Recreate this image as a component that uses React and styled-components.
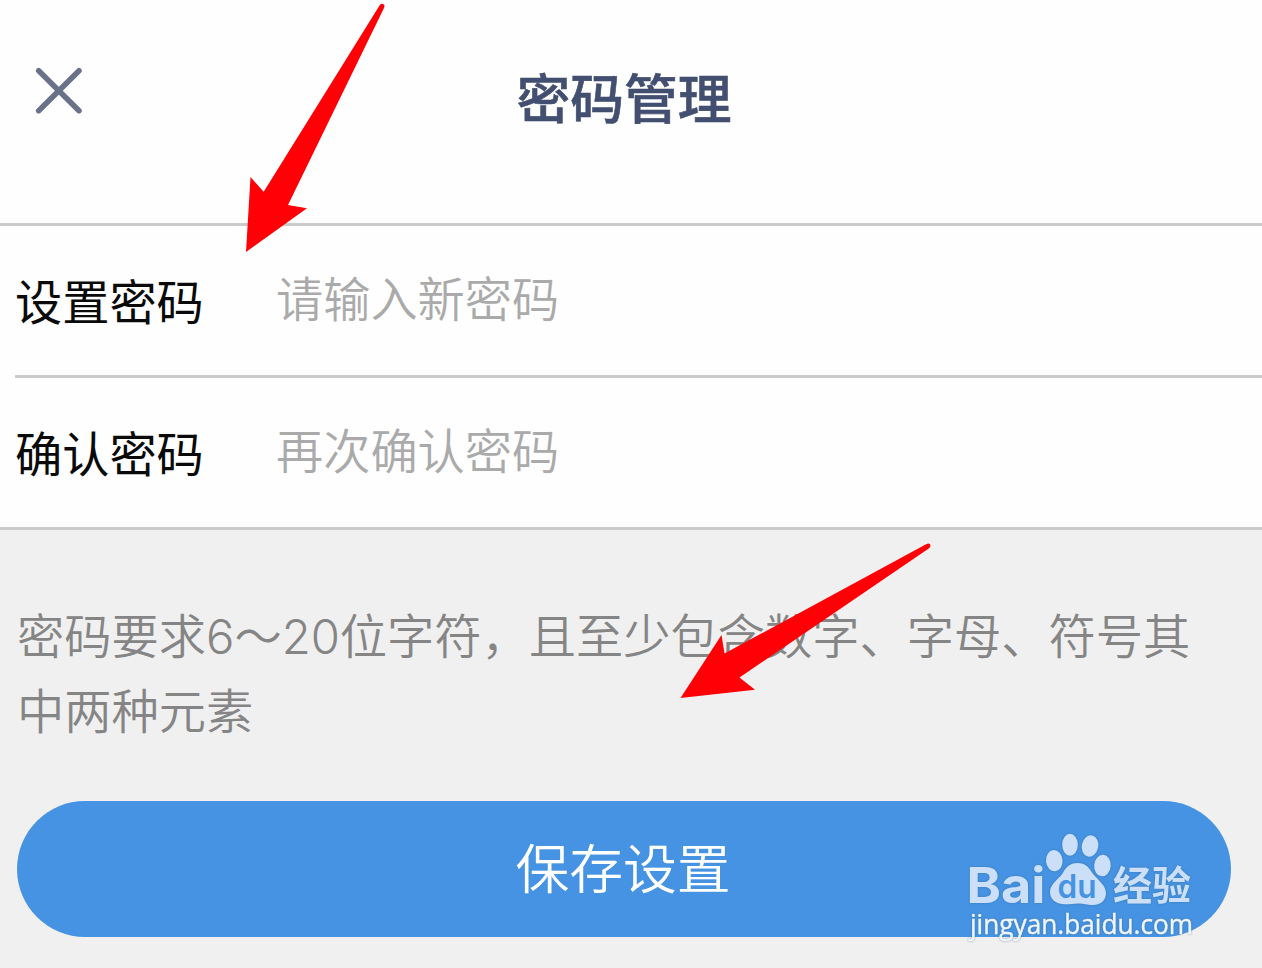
import React, { useState } from 'react';
import styled, { createGlobalStyle } from 'styled-components';

const GlobalStyle = createGlobalStyle`
  * {
    box-sizing: border-box;
  }
  body {
    margin: 0;
    background: #f0f0f0;
    font-family: 'Inter', 'Noto Sans CJK SC', sans-serif;
  }
`;

const Page = styled.div`
  position: relative;
  display: flex;
  flex-direction: column;
  height: 968px;
  overflow: hidden;
  background: #f0f0f0;
`;

const Header = styled.header`
  display: grid;
  grid-template-columns: 118px 1fr 132px;
  height: 223px;
  background: #fefefe;
`;

const CloseButton = styled.button`
  width: 118px;
  height: 182px;
  padding: 0;
  border: none;
  background: none;
  cursor: pointer;
  svg {
    display: block;
  }
`;

const Title = styled.h1`
  margin: 0;
  height: 192px;
  font-family: 'Noto Sans CJK SC', sans-serif;
  font-size: 53.8px;
  font-weight: 500;
  line-height: 192px;
  text-align: center;
  color: #424f70;
  -webkit-text-stroke: 0.6px #424f70;
`;

const Form = styled.div`
  border-top: 3px solid #cbcbcb;
  border-bottom: 3px solid #cbcbcb;
  background: #fefefe;
`;

const Row = styled.label`
  display: flex;
  align-items: center;
  height: ${(props) => (props.$divided ? '152px' : '149px')};
  margin-left: 15px;
  border-bottom: ${(props) => (props.$divided ? '3px solid #cbcbcb' : 'none')};
`;

const Label = styled.span`
  width: 261px;
  padding-top: 4px;
  font-size: 47.2px;
  line-height: 70px;
  color: #0a0a0a;
`;

const Input = styled.input`
  flex: 1;
  height: 80px;
  margin-bottom: 2px;
  padding: 0;
  border: none;
  outline: none;
  background: none;
  font-family: inherit;
  font-size: 47.2px;
  font-weight: 350;
  &::placeholder {
    color: #aaaaaa;
    opacity: 1;
  }
`;

const Hint = styled.p`
  margin: 69px 0 0;
  padding: 0 30px 0 17px;
  font-size: 47.25px;
  font-weight: 350;
  line-height: 75px;
  color: #858585;
`;

const SaveButton = styled.button`
  width: 1214px;
  height: 136px;
  margin: 52px 0 0 17px;
  padding: 0 2px 8px 0;
  border: none;
  border-radius: 68px;
  background: #4593e2;
  font-family: inherit;
  font-size: 53.8px;
  font-weight: 350;
  color: #ffffff;
  cursor: pointer;
`;

const Arrows = styled.svg`
  position: absolute;
  top: 0;
  left: 0;
  pointer-events: none;
`;

const Watermark = styled.svg`
  position: absolute;
  right: 62px;
  bottom: 22px;
  pointer-events: none;
`;

const Mark = styled.g`
  fill: #cbe0f8;
  filter: drop-shadow(0 0 1px rgba(50, 90, 140, 0.5));
`;

const SiteName = styled.text`
  font-family: 'Open Sans', sans-serif;
  font-size: 27px;
  fill: #f0f6fd;
  stroke: #f0f6fd;
  stroke-width: 0.4px;
  filter: drop-shadow(0 0 1px rgba(60, 90, 125, 0.55));
`;

function PasswordRow({ label, placeholder, divided }) {
  const [value, setValue] = useState('');
  return (
    <Row $divided={divided}>
      <Label>{label}</Label>
      <Input
        type="text"
        placeholder={placeholder}
        value={value}
        onChange={(e) => setValue(e.target.value)}
      />
    </Row>
  );
}

function BaiduMark() {
  return (
    <Watermark width="240" height="120" viewBox="960 826 240 120">
      <Mark>
        <text x="966.5" y="903" fontFamily="Inter" fontWeight="700" fontSize="50" textLength="79" lengthAdjust="spacingAndGlyphs">Bai</text>
        <ellipse cx="1054.3" cy="860.7" rx="8.3" ry="10.6" transform="rotate(-5 1054 861)" />
        <ellipse cx="1070" cy="844.7" rx="7.8" ry="11" />
        <ellipse cx="1090" cy="846" rx="8.2" ry="10.8" transform="rotate(12 1090 846)" />
        <ellipse cx="1102.5" cy="865.5" rx="8.3" ry="10.8" transform="rotate(5 1102 865)" />
        <path d="M1077.5 863C1084 863 1088 866 1091 871C1094 877 1106 884 1106 893C1106 901 1100 905 1093 905C1087 905 1084 903.5 1078 903.5C1072 903.5 1068 905 1062 904C1055 903 1050 899 1050 892C1050 883 1061 878 1064 871C1067 866 1071 863 1077.5 863Z" />
        <text x="1113" y="900" fontFamily="Noto Sans CJK SC" fontWeight="700" fontSize="40" textLength="78" lengthAdjust="spacingAndGlyphs">经验</text>
      </Mark>
      <text x="1057.5" y="898" fontFamily="Inter" fontWeight="600" fontSize="32" textLength="39" lengthAdjust="spacingAndGlyphs" fill="#4593e2">du</text>
      <SiteName x="970" y="934" textLength="223" lengthAdjust="spacingAndGlyphs">jingyan.baidu.com</SiteName>
    </Watermark>
  );
}

function App() {
  return (
    <Page>
      <GlobalStyle />
      <Header>
        <CloseButton aria-label="关闭">
          <svg width="118" height="182" viewBox="0 0 118 182" fill="none" stroke="#697288" strokeWidth="5.5" strokeLinecap="round">
            <path d="M38.7 70.7L79 110.7M79 70.7L38.7 110.7" />
          </svg>
        </CloseButton>
        <Title>密码管理</Title>
      </Header>
      <Form>
        <PasswordRow label="设置密码" placeholder="请输入新密码" divided />
        <PasswordRow label="确认密码" placeholder="再次确认密码" />
      </Form>
      <Hint>密码要求6～20位字符，且至少包含数字、字母、符号其中两种元素</Hint>
      <SaveButton>保存设置</SaveButton>
      <Arrows width="1262" height="968" viewBox="0 0 1262 968" fill="#ff0006">
        <path d="M380 4.8Q383 2.5 384.5 5.5Q384.6 7 383.5 9L288 205L307 208.3L246 252L250.5 177L263.7 191.7Z" />
        <path d="M926.5 544Q930 542.5 930.5 545.5Q930.5 547.5 928 549L739.5 677.5L755 689.8L680.5 698L721.5 635L724.5 653.5Z" />
      </Arrows>
      <BaiduMark />
    </Page>
  );
}

export default App;
